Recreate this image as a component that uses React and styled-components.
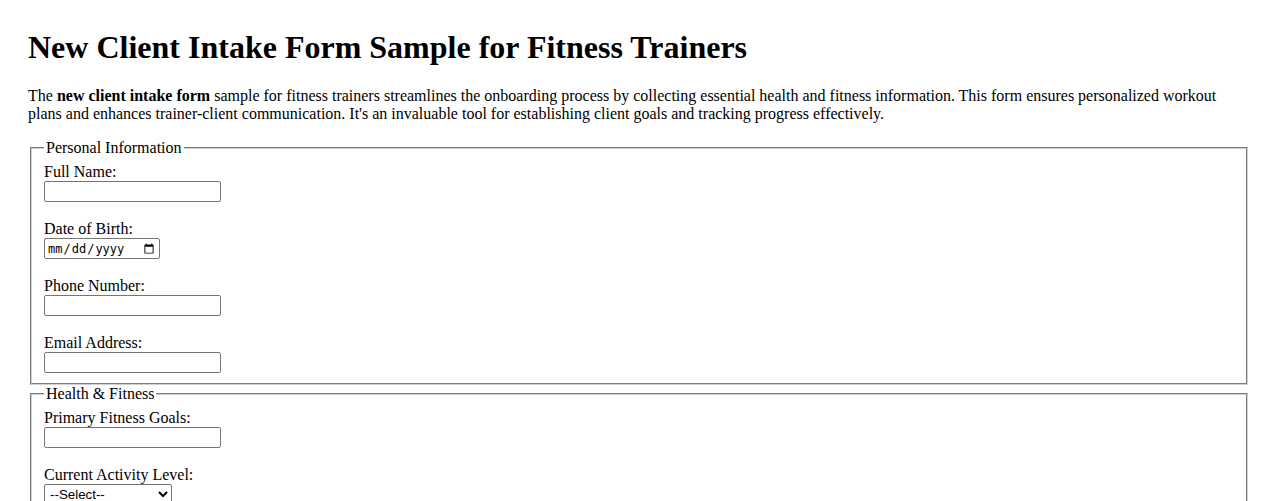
import React from "react";
import styled, { createGlobalStyle } from "styled-components";

const GlobalStyle = createGlobalStyle`
  html, body {
    margin: 0;
    padding: 0;
    background: #ffffff;
  }
  body {
    font-family: "Liberation Serif", "Times New Roman", serif;
    font-size: 16px;
    color: #000000;
  }
`;

const Page = styled.main`
  padding: 29px 28px 28px;
`;

const Title = styled.h1`
  font-size: 32px;
  font-weight: bold;
  margin: 0 0 21px;
  line-height: normal;
`;

const Intro = styled.p`
  margin: 0 0 16px;
  line-height: 18px;
`;

const Section = styled.fieldset`
  margin: 0 2px;
  padding: 6px 12px 10px;
  border: 2px groove #d0d0d0;
`;

const Legend = styled.legend`
  padding: 0 2px;
  font-size: 16px;
`;

const Label = styled.label`
  display: inline;
`;

const TextField = styled.input`
  font-family: "Liberation Sans", Arial, sans-serif;
  font-size: 13.333px;
  width: 177px;
  height: 21px;
  box-sizing: border-box;
  padding: 1px 2px;
  border: 1px solid #767676;
  border-radius: 2px;
  background: #ffffff;
  margin: 0;
`;

const DateField = styled.input`
  font-family: "DejaVu Sans Mono", "Liberation Mono", monospace;
  font-size: 12px;
  width: 116px;
  height: 21px;
  box-sizing: border-box;
  padding: 1px 2px;
  border: 1px solid #767676;
  border-radius: 2px;
  background: #ffffff;
  margin: 0;
`;

const Dropdown = styled.select`
  font-family: "Liberation Sans", Arial, sans-serif;
  font-size: 13.333px;
  width: 128px;
  height: 20px;
  box-sizing: border-box;
  padding: 0 0 0 1px;
  border: 1px solid #767676;
  border-radius: 2px;
  background: #ffffff;
  color: #000;
  margin: 0;
`;

const Field = ({ id, label, children }) => (
  <>
    <Label htmlFor={id}>{label}</Label>
    <br />
    {children}
  </>
);

export default function App() {
  return (
    <>
      <GlobalStyle />
      <Page>
        <Title>New Client Intake Form Sample for Fitness Trainers</Title>
        <Intro>
          The <strong>new client intake form</strong> sample for fitness trainers
          streamlines the onboarding process by collecting essential health and
          fitness information. This form ensures personalized workout plans and
          enhances trainer-client communication. It's an invaluable tool for
          establishing client goals and tracking progress effectively.
        </Intro>
        <form>
          <Section>
            <Legend>Personal Information</Legend>
            <Field id="fullName" label="Full Name:">
              <TextField id="fullName" type="text" />
            </Field>
            <br />
            <br />
            <Field id="dob" label="Date of Birth:">
              <DateField id="dob" type="date" />
            </Field>
            <br />
            <br />
            <Field id="phone" label="Phone Number:">
              <TextField id="phone" type="tel" />
            </Field>
            <br />
            <br />
            <Field id="email" label="Email Address:">
              <TextField id="email" type="email" />
            </Field>
          </Section>
          <Section>
            <Legend>Health &amp; Fitness</Legend>
            <Field id="goals" label="Primary Fitness Goals:">
              <TextField id="goals" type="text" />
            </Field>
            <br />
            <br />
            <Field id="activity" label="Current Activity Level:">
              <Dropdown id="activity" defaultValue="">
                <option value="">--Select--</option>
                <option value="sedentary">Sedentary</option>
                <option value="light">Lightly Active</option>
                <option value="moderate">Moderately Active</option>
                <option value="very">Very Active</option>
              </Dropdown>
            </Field>
            <br />
            <br />
            <Field id="injuries" label="Injuries or Medical Conditions:">
              <TextField id="injuries" type="text" />
            </Field>
          </Section>
        </form>
      </Page>
    </>
  );
}
